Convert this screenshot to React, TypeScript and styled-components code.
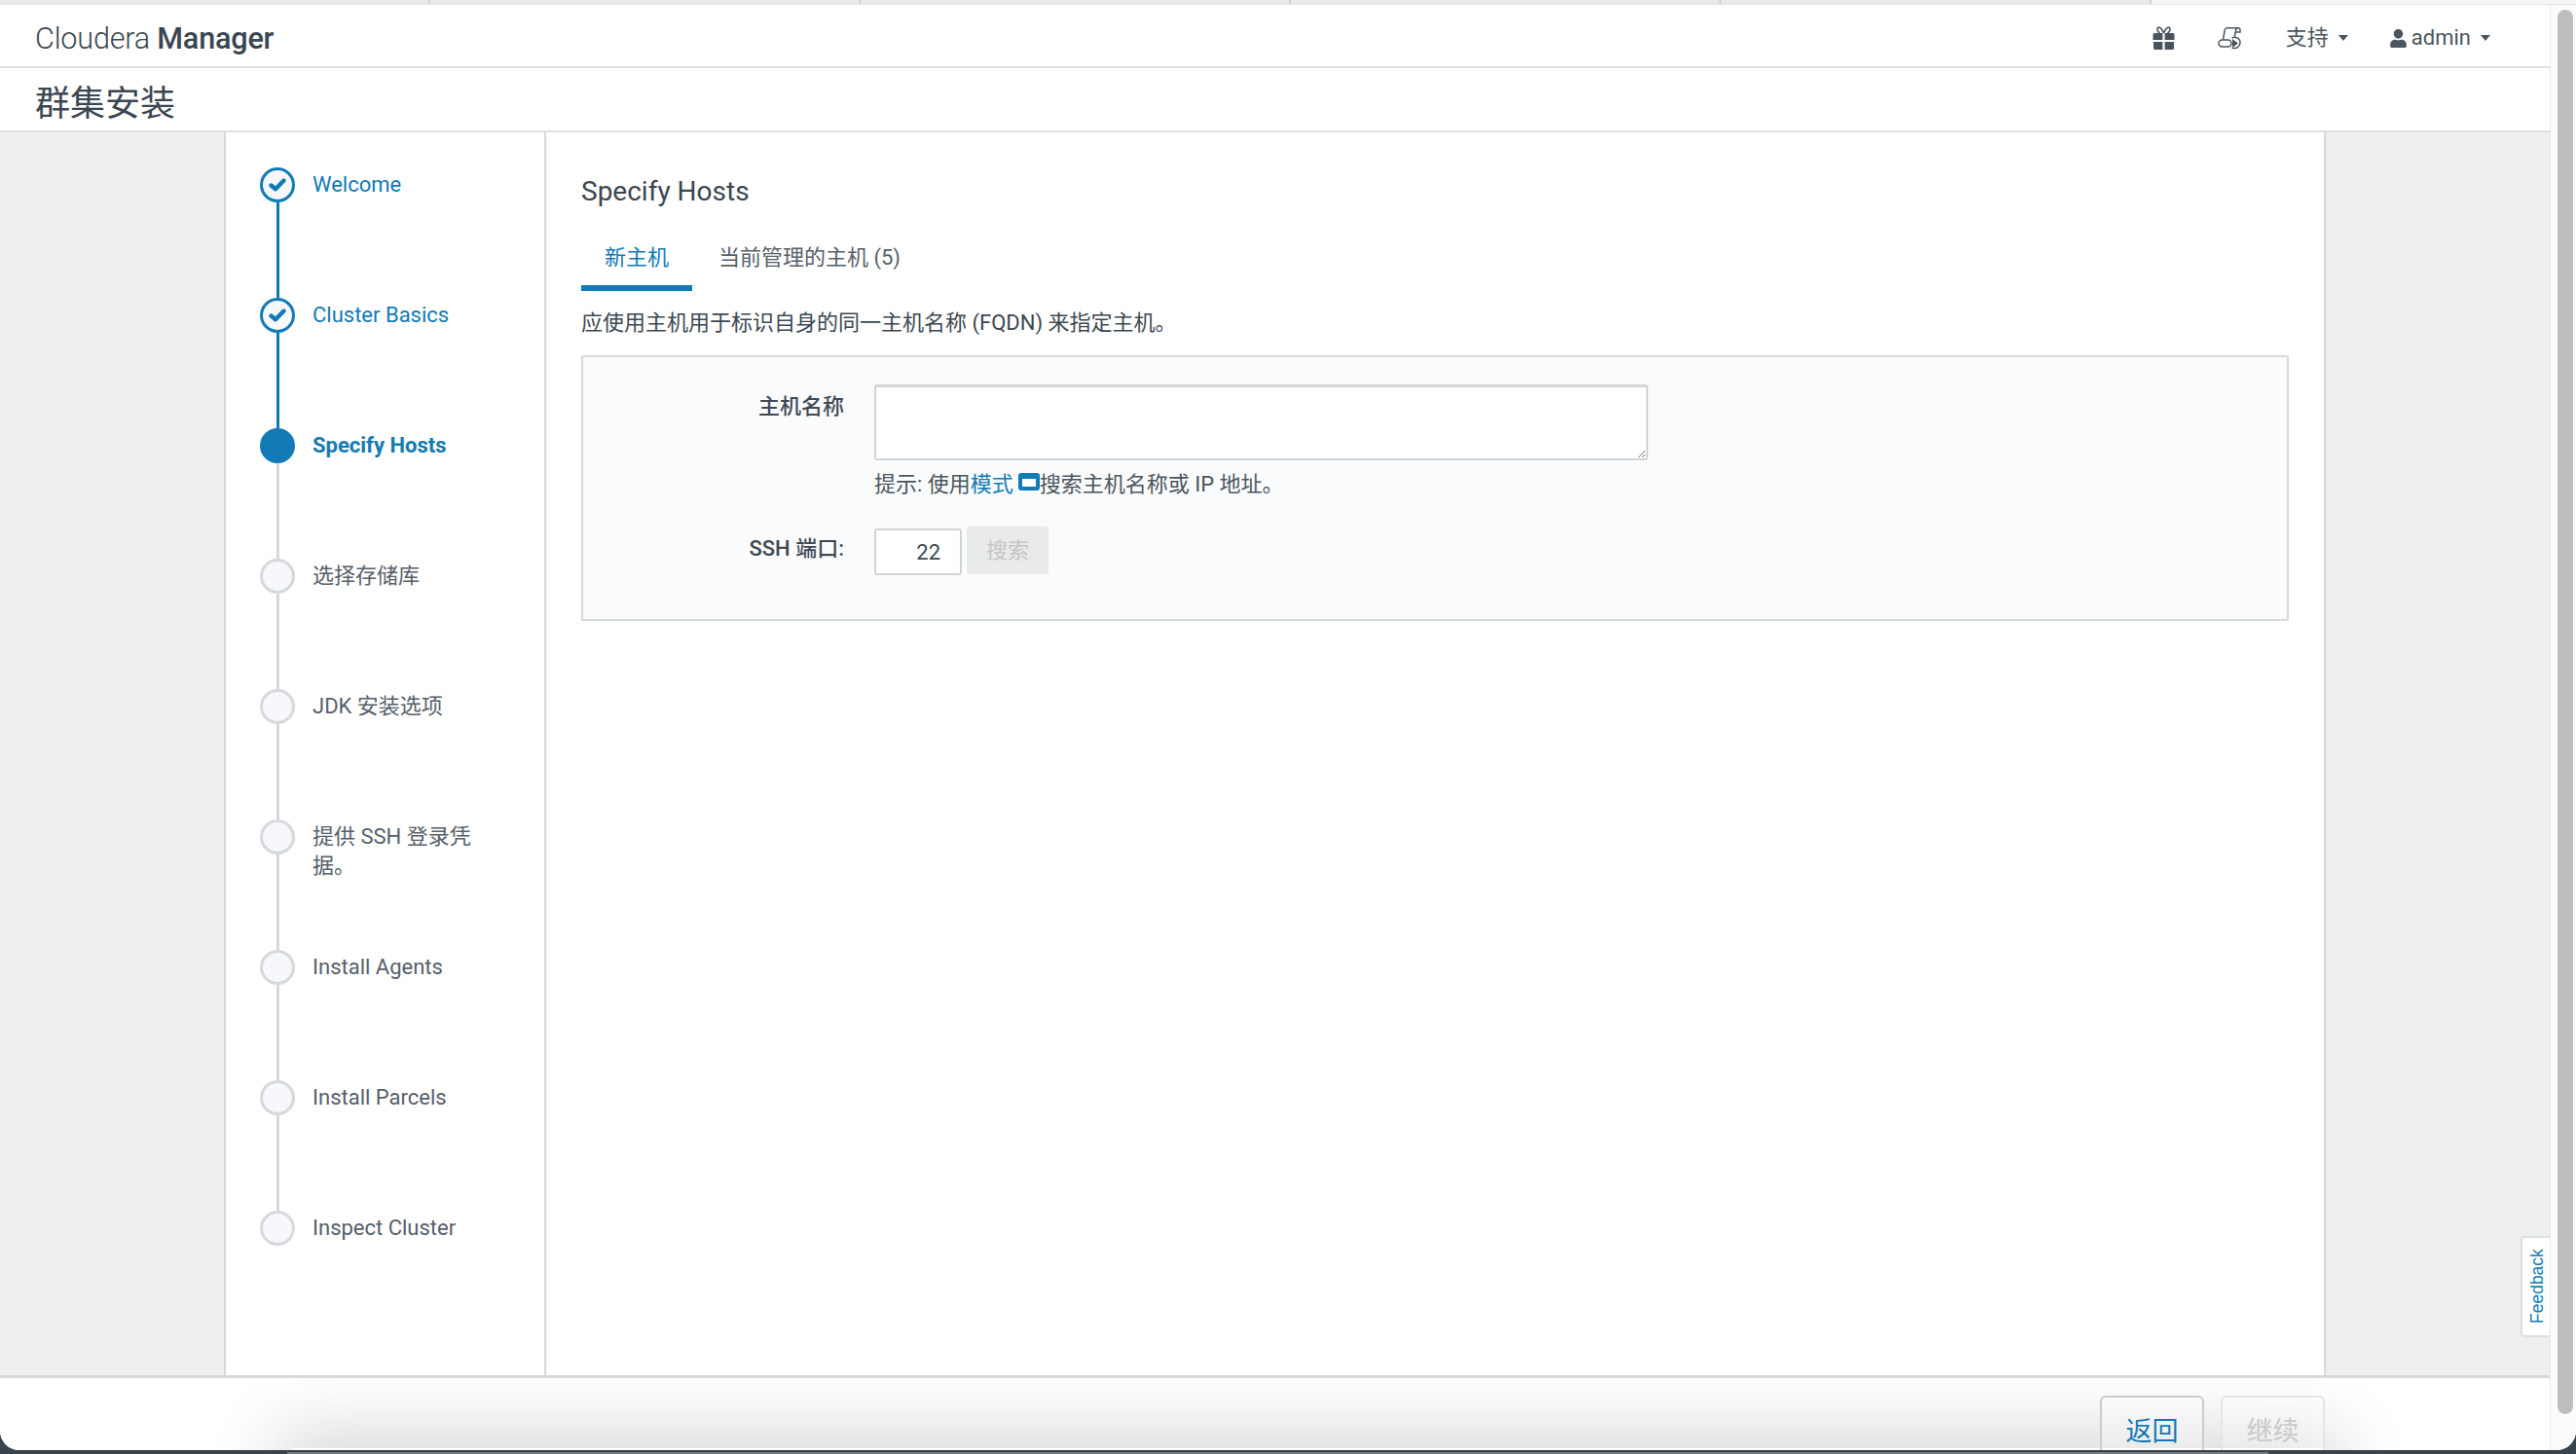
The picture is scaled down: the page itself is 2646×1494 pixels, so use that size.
import styled, { createGlobalStyle } from "styled-components";
import { FaUser } from "react-icons/fa";

const LINK = "#127ab5";
const LINE = "#d6d9dc";
const TEXT = "#3c4852";
const SANS = `Roboto, "Noto Sans CJK SC", sans-serif`;

const GlobalStyle = createGlobalStyle`
  html, body {
    margin: 0;
    padding: 0;
    overflow: hidden;
    background: #39434b;
  }
  * { box-sizing: border-box; }
`;

/* ── Window chrome ─────────────────────────────────────────────── */

const Desktop = styled.div`
  display: flex;
  flex-direction: column;
  width: 2646px;
  height: 1494px;
  overflow: hidden;
  background: #39434b;
  font-family: ${SANS};
  font-size: 22px;
  color: ${TEXT};
`;

const TabStrip = styled.div`
  display: flex;
  flex: none;
  height: 5px;
  background: #f5f6f8;
  border-bottom: 1px solid #dfe1e3;
`;

const StripTab = styled.div`
  width: 442px;
  background: #e7e9eb;
  border-right: 2px solid #cfd2d5;
`;

const Window = styled.div`
  display: flex;
  flex: 1;
  min-height: 0;
  overflow: hidden;
  background: #fff;
  border-radius: 0 0 20px 20px;
`;

const Page = styled.div`
  position: relative;
  display: flex;
  flex-direction: column;
  width: 2619px;
  flex: none;
`;

const ScrollTrack = styled.div`
  display: flex;
  flex: 1;
  padding: 5px 3px 37px 7px;
  background: #fbfbfc;
  border-left: 1px solid #e6e8ea;
`;

const ScrollThumb = styled.div`
  flex: 1;
  background: #bcbdbf;
  border-radius: 9px;
`;

const BottomStrip = styled.div`
  display: flex;
  flex: none;
  height: 4px;
  padding: 2px 316px 0 295px;
`;

const BottomStripBar = styled.div`
  flex: 1;
  background: #6f7c85;
`;

/* ── Header ────────────────────────────────────────────────────── */

const NavBar = styled.header`
  display: flex;
  flex: none;
  align-items: center;
  justify-content: space-between;
  height: 65px;
  padding: 5px 61px 0 36px;
  border-bottom: 2px solid #dfe1e3;
`;

const Logo = styled.div`
  font-size: 30.6px;
  font-weight: 300;
  letter-spacing: -0.2px;
  color: #3a4650;

  b {
    font-weight: 500;
  }
`;

const NavItems = styled.nav`
  display: flex;
  align-items: center;
  color: #4a5560;
`;

const NavIcon = styled.span<{ $gap: number }>`
  display: inline-flex;
  width: 24px;
  height: 24px;
  align-items: center;
  justify-content: center;
  margin-right: ${(p) => p.$gap}px;
  color: #48535d;
`;

const NavMenu = styled.span<{ $left: number }>`
  display: inline-flex;
  align-items: center;
  gap: 7px;
  margin-left: ${(p) => p.$left}px;
  font-size: 22px;
  line-height: 30px;

  svg {
    margin-right: -3px;
  }
`;

const Caret = styled.i`
  display: inline-block;
  width: 0;
  height: 0;
  margin-left: 3px;
  border-top: 6px solid #4a5560;
  border-left: 5.5px solid transparent;
  border-right: 5.5px solid transparent;
`;

const TitleBar = styled.div`
  display: flex;
  flex: none;
  align-items: center;
  height: 66px;
  padding: 9px 0 0 36px;
  border-bottom: 2px solid #dfe1e3;
`;

const PageTitle = styled.h1`
  margin: 0;
  font-size: 36px;
  font-weight: 400;
  line-height: 1;
  color: #3a4650;
`;

/* ── Body ──────────────────────────────────────────────────────── */

const Body = styled.div`
  display: flex;
  flex: 1;
  min-height: 0;
  justify-content: center;
  background: #edeef0;
`;

const Card = styled.div`
  display: flex;
  width: 2159px;
  background: #fff;
  border-left: 2px solid ${LINE};
  border-right: 2px solid ${LINE};
`;

const Sidebar = styled.aside`
  width: 329px;
  flex: none;
  padding: 36px 0 0 35px;
  border-right: 2px solid ${LINE};
`;

const Step = styled.div`
  display: flex;
  gap: 18px;
  height: 134px;
`;

const Rail = styled.div`
  display: flex;
  flex-direction: column;
  align-items: center;
  width: 36px;
  flex: none;
`;

type Status = "done" | "current" | "todo";

const Dot = styled.div<{ $status: Status }>`
  display: flex;
  flex: none;
  align-items: center;
  justify-content: center;
  width: 36px;
  height: 36px;
  border-radius: 50%;
  border: 3px solid ${(p) => (p.$status === "todo" ? LINE : LINK)};
  background: ${(p) => (p.$status === "current" ? LINK : "#f6f8fb")};
`;

const Connector = styled.div<{ $active: boolean }>`
  flex: 1;
  width: 3px;
  background: ${(p) => (p.$active ? LINK : LINE)};
`;

const StepLabel = styled.div<{ $status: Status }>`
  width: 175px;
  padding-top: 3px;
  font-size: 22px;
  line-height: 30px;
  font-weight: ${(p) => (p.$status === "current" ? 700 : 400)};
  color: ${(p) => (p.$status === "todo" ? "#55606a" : LINK)};
`;

const Content = styled.main`
  flex: 1;
  padding: 41px 36px 0 36px;
`;

const Heading = styled.h2`
  margin: 0;
  font-size: 28px;
  font-weight: 400;
  line-height: 40px;
  color: #3a4650;
`;

const Tabs = styled.div`
  display: flex;
  margin-top: 21px;
`;

const Tab = styled.div<{ $active?: boolean }>`
  height: 61px;
  margin-right: 3px;
  padding: 0 24px;
  font-size: 22px;
  line-height: 54px;
  color: ${(p) => (p.$active ? LINK : "#55606a")};
  border-bottom: 6px solid ${(p) => (p.$active ? LINK : "transparent")};
`;

const Description = styled.p`
  margin: 17px 0 0;
  font-size: 22px;
  line-height: 32px;
  color: ${TEXT};
`;

const FormPanel = styled.div`
  display: grid;
  grid-template-columns: 268px 1fr;
  column-gap: 31px;
  align-content: start;
  height: 273px;
  margin-top: 17px;
  padding-top: 28px;
  background: #fafbfc;
  border: 2px solid ${LINE};
  border-radius: 2px;
`;

const FieldLabel = styled.label`
  padding-top: 8px;
  font-size: 22px;
  font-weight: 500;
  line-height: 30px;
  text-align: right;
  color: #3f4a54;
`;

const HostInput = styled.textarea`
  display: block;
  width: 795px;
  height: 78px;
  padding: 8px 12px;
  resize: vertical;
  background: #fff;
  border: 2px solid #d2d5d8;
  border-top-width: 3px;
  border-radius: 3px;
  outline: none;
  font: inherit;
`;

const Hint = styled.div`
  display: flex;
  align-items: center;
  grid-column: 2;
  height: 30px;
  margin-top: 7px;
  font-size: 22px;
  color: #4a555e;

  a {
    margin-right: 5px;
    color: ${LINK};
    text-decoration: none;
  }
`;

const PortLabel = styled.div`
  display: flex;
  align-items: center;
  justify-content: flex-end;
  grid-column: 1;
  grid-row: 3;
  margin-top: 31px;
  padding-bottom: 10px;
  font-size: 22px;
  font-weight: 500;
  color: #3f4a54;
`;

const PortRow = styled.div`
  display: flex;
  align-items: flex-end;
  gap: 5px;
  grid-column: 2;
  grid-row: 3;
  height: 50px;
  margin-top: 31px;
`;

const PortInput = styled.input`
  width: 90px;
  height: 48px;
  padding: 0 20px 0 8px;
  text-align: right;
  background: #fff;
  border: 2px solid #d2d5d8;
  border-radius: 3px;
  outline: none;
  font: inherit;
  color: ${TEXT};
`;

const SearchButton = styled.button`
  align-self: flex-start;
  width: 84px;
  height: 49px;
  padding: 0 0 6px;
  background: #e9eaea;
  border: 0;
  border-radius: 3px;
  font: inherit;
  color: #c4c5c6;
`;

/* ── Footer ────────────────────────────────────────────────────── */

const Footer = styled.footer`
  position: relative;
  display: flex;
  flex: none;
  justify-content: flex-end;
  gap: 17px;
  height: 77px;
  padding: 18px 231px 0 0;
  overflow: hidden;
  background: #fff;
  border-top: 3px solid ${LINE};

  &::before {
    content: "";
    position: absolute;
    left: 300px;
    right: 230px;
    top: 72px;
    height: 40px;
    box-shadow: 0 0 70px 16px rgba(0, 0, 0, 0.17);
  }
`;

const FooterButton = styled.button<{ $disabled?: boolean }>`
  position: relative;
  flex: none;
  width: 107px;
  height: 72px;
  padding: 0 0 3px;
  background: rgba(255, 255, 255, 0.25);
  border: 2px solid ${(p) => (p.$disabled ? "#e3e5e7" : "#c9ccce")};
  border-radius: 6px;
  font-family: ${SANS};
  font-size: 27px;
  color: ${(p) => (p.$disabled ? "#c8c9ca" : LINK)};
`;

const FeedbackTab = styled.div`
  position: absolute;
  right: 0;
  top: 1265px;
  display: flex;
  align-items: center;
  justify-content: center;
  width: 30px;
  height: 104px;
  padding-right: 3px;
  writing-mode: vertical-rl;
  transform: rotate(180deg);
  font-family: "Liberation Sans", sans-serif;
  font-size: 17.5px;
  color: ${LINK};
  background: #fff;
  border: 2px solid #dcdfe2;
  border-left: 0;
  border-radius: 0 4px 4px 0;
`;

const steps: { label: string; status: Status }[] = [
  { label: "Welcome", status: "done" },
  { label: "Cluster Basics", status: "done" },
  { label: "Specify Hosts", status: "current" },
  { label: "选择存储库", status: "todo" },
  { label: "JDK 安装选项", status: "todo" },
  { label: "提供 SSH 登录凭据。", status: "todo" },
  { label: "Install Agents", status: "todo" },
  { label: "Install Parcels", status: "todo" },
  { label: "Inspect Cluster", status: "todo" },
];

function GiftIcon() {
  return (
    <svg width="23" height="24" viewBox="0 0 23 24">
      <path
        d="M11.5 7 C9.5 2.5 7.5 0.8 6 1.2 C4.3 1.7 4.6 5 7.5 7 M11.5 7 C13.5 2.5 15.5 0.8 17 1.2 C18.7 1.7 18.4 5 15.5 7"
        fill="none"
        stroke="currentColor"
        strokeWidth="1.6"
      />
      <path
        d="M2 7 H10.4 V14 H0.5 V8.5 Q0.5 7 2 7 Z M12.6 7 H21 Q22.5 7 22.5 8.5 V14 H12.6 Z M1 16 H10.4 V24 H2.5 Q1 24 1 22.5 Z M12.6 16 H22 V22.5 Q22 24 20.5 24 H12.6 Z"
        fill="currentColor"
      />
    </svg>
  );
}

function ScrollPlayIcon() {
  return (
    <svg width="24" height="24" viewBox="0 0 24 24" fill="none" stroke="currentColor" strokeWidth="1.5">
      <path d="M5.5 13.5 L7.2 3.8 Q7.6 1.8 9.6 1.8 H21 Q23 1.8 23 3.8 V6 H18.6 V4 Q18.6 1.8 21 1.8" />
      <path d="M18.2 6 L17.4 10.5" />
      <rect x="1" y="14" width="13" height="7" rx="3.5" />
      <path d="M14.5 12 C17 10.8 21 11.2 22.6 14.5 C23.8 17.5 22.2 21.5 18.5 22.4 C17 22.8 15.5 22.4 14.5 21.8" />
      <path d="M15 13 L21 17.5 L15 22 Z" fill="currentColor" stroke="none" />
    </svg>
  );
}

function CheckIcon() {
  return (
    <svg width="18" height="14" viewBox="0 0 18 14">
      <polyline
        points="2.5,7.5 7,11.3 15.5,2.5"
        fill="none"
        stroke={LINK}
        strokeWidth="4.4"
        strokeLinecap="round"
        strokeLinejoin="round"
      />
    </svg>
  );
}

function PopoutIcon() {
  return (
    <svg width="22" height="18" viewBox="0 0 22 18">
      <rect width="22" height="18" rx="3" fill={LINK} />
      <rect x="4" y="6" width="14" height="8" fill="#fff" />
    </svg>
  );
}

export default function App() {
  return (
    <>
      <GlobalStyle />
      <Desktop>
        <TabStrip>
          <StripTab />
          <StripTab />
          <StripTab />
          <StripTab />
          <StripTab />
        </TabStrip>
        <Window>
          <Page>
            <NavBar>
              <Logo>
                Cloudera <b>Manager</b>
              </Logo>
              <NavItems>
                <NavIcon $gap={43}>
                  <GiftIcon />
                </NavIcon>
                <NavIcon $gap={0}>
                  <ScrollPlayIcon />
                </NavIcon>
                <NavMenu $left={46}>
                  支持 <Caret />
                </NavMenu>
                <NavMenu $left={42}>
                  <FaUser size={19} />
                  admin <Caret />
                </NavMenu>
              </NavItems>
            </NavBar>
            <TitleBar>
              <PageTitle>群集安装</PageTitle>
            </TitleBar>
            <Body>
              <Card>
                <Sidebar>
                  {steps.map((s, i) => (
                    <Step key={s.label}>
                      <Rail>
                        <Dot $status={s.status}>{s.status === "done" && <CheckIcon />}</Dot>
                        {i < steps.length - 1 && <Connector $active={s.status === "done"} />}
                      </Rail>
                      <StepLabel $status={s.status}>{s.label}</StepLabel>
                    </Step>
                  ))}
                </Sidebar>
                <Content>
                  <Heading>Specify Hosts</Heading>
                  <Tabs>
                    <Tab $active>新主机</Tab>
                    <Tab>当前管理的主机 (5)</Tab>
                  </Tabs>
                  <Description>应使用主机用于标识自身的同一主机名称 (FQDN) 来指定主机。</Description>
                  <FormPanel>
                    <FieldLabel>主机名称</FieldLabel>
                    <HostInput />
                    <Hint>
                      提示: 使用<a href="#modes">模式</a>
                      <PopoutIcon />
                      搜索主机名称或 IP 地址。
                    </Hint>
                    <PortLabel>SSH 端口:</PortLabel>
                    <PortRow>
                      <PortInput value="22" readOnly />
                      <SearchButton disabled>搜索</SearchButton>
                    </PortRow>
                  </FormPanel>
                </Content>
              </Card>
            </Body>
            <Footer>
              <FooterButton>返回</FooterButton>
              <FooterButton $disabled disabled>
                继续
              </FooterButton>
            </Footer>
            <FeedbackTab>Feedback</FeedbackTab>
          </Page>
          <ScrollTrack>
            <ScrollThumb />
          </ScrollTrack>
        </Window>
        <BottomStrip>
          <BottomStripBar />
        </BottomStrip>
      </Desktop>
    </>
  );
}
